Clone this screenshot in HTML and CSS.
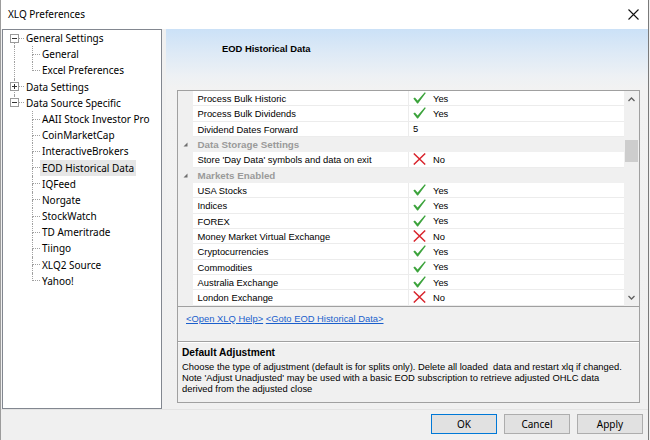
FILE: index.html
```html
<!DOCTYPE html>
<html>
<head>
<meta charset="utf-8">
<link rel="stylesheet" href="styles.css">
</head>
<body>
<div class="window">
  <div class="titlebar">
    <span class="title">XLQ Preferences</span>
    <svg class="close" width="11" height="11" viewBox="0 0 11 11"><path d="M0.5 0.5 L10.5 10.5 M10.5 0.5 L0.5 10.5" stroke="#111" stroke-width="1.1" fill="none"/></svg>
  </div>
  <div class="main">
    <div class="tree">
      <div class="row">
        <div class="cn l0"><div class="a nv"></div><div class="b"></div>
          <svg class="box" width="9" height="9" viewBox="0 0 9 9"><rect x="0.5" y="0.5" width="8" height="8" fill="#fff" stroke="#9a9a9a"/><path d="M2 4.5 H7" stroke="#333"/></svg>
        </div>
        <span class="lbl">General Settings</span>
      </div>
      <div class="row">
        <div class="pass v"></div>
        <div class="cn l1"><div class="a"></div><div class="b"></div></div>
        <span class="lbl">General</span>
      </div>
      <div class="row">
        <div class="pass v"></div>
        <div class="cn l1"><div class="a"></div><div class="b nv"></div></div>
        <span class="lbl">Excel Preferences</span>
      </div>
      <div class="row">
        <div class="cn l0"><div class="a"></div><div class="b"></div>
          <svg class="box" width="9" height="9" viewBox="0 0 9 9"><rect x="0.5" y="0.5" width="8" height="8" fill="#fff" stroke="#9a9a9a"/><path d="M2 4.5 H7 M4.5 2 V7" stroke="#333"/></svg>
        </div>
        <span class="lbl">Data Settings</span>
      </div>
      <div class="row">
        <div class="cn l0"><div class="a"></div><div class="b nv"></div>
          <svg class="box" width="9" height="9" viewBox="0 0 9 9"><rect x="0.5" y="0.5" width="8" height="8" fill="#fff" stroke="#9a9a9a"/><path d="M2 4.5 H7" stroke="#333"/></svg>
        </div>
        <span class="lbl">Data Source Specific</span>
      </div>
      <div class="row"><div class="pass"></div><div class="cn l1"><div class="a"></div><div class="b"></div></div><span class="lbl">AAII Stock Investor Pro</span></div>
      <div class="row"><div class="pass"></div><div class="cn l1"><div class="a"></div><div class="b"></div></div><span class="lbl">CoinMarketCap</span></div>
      <div class="row"><div class="pass"></div><div class="cn l1"><div class="a"></div><div class="b"></div></div><span class="lbl">InteractiveBrokers</span></div>
      <div class="row"><div class="pass"></div><div class="cn l1"><div class="a"></div><div class="b"></div></div><span class="lbl sel">EOD Historical Data</span></div>
      <div class="row"><div class="pass"></div><div class="cn l1"><div class="a"></div><div class="b"></div></div><span class="lbl">IQFeed</span></div>
      <div class="row"><div class="pass"></div><div class="cn l1"><div class="a"></div><div class="b"></div></div><span class="lbl">Norgate</span></div>
      <div class="row"><div class="pass"></div><div class="cn l1"><div class="a"></div><div class="b"></div></div><span class="lbl">StockWatch</span></div>
      <div class="row"><div class="pass"></div><div class="cn l1"><div class="a"></div><div class="b"></div></div><span class="lbl">TD Ameritrade</span></div>
      <div class="row"><div class="pass"></div><div class="cn l1"><div class="a"></div><div class="b"></div></div><span class="lbl">Tiingo</span></div>
      <div class="row"><div class="pass"></div><div class="cn l1"><div class="a"></div><div class="b"></div></div><span class="lbl">XLQ2 Source</span></div>
      <div class="row"><div class="pass"></div><div class="cn l1"><div class="a"></div><div class="b nv"></div></div><span class="lbl">Yahoo!</span></div>
    </div>

    <div class="panel">
      <div class="panel-head">EOD Historical Data</div>
      <div class="pg">
        <div class="grid">
          <div class="rows">
            <div class="prow"><div class="gut"></div><div class="lab">Process Bulk Historic</div><div class="val"><svg class="ico" width="13" height="12" viewBox="0 0 13 12"><path d="M0.3 6.6 L1.9 5.4 L4.6 8.6 L11.8 0.3 L12.8 1.1 L5 11.5 L4.2 11.5 Z" fill="#3ca33c"/></svg><span>Yes</span></div></div>
            <div class="prow"><div class="gut"></div><div class="lab">Process Bulk Dividends</div><div class="val"><svg class="ico" width="13" height="12" viewBox="0 0 13 12"><path d="M0.3 6.6 L1.9 5.4 L4.6 8.6 L11.8 0.3 L12.8 1.1 L5 11.5 L4.2 11.5 Z" fill="#3ca33c"/></svg><span>Yes</span></div></div>
            <div class="prow"><div class="gut"></div><div class="lab">Dividend Dates Forward</div><div class="val">5</div></div>
            <div class="prow cat"><div class="gut"><svg width="5" height="5" viewBox="0 0 5 5"><path d="M4.5 0.5 V4.5 H0.5 Z" fill="#6e6e6e"/></svg></div><div class="catlab">Data Storage Settings</div></div>
            <div class="prow"><div class="gut"></div><div class="lab">Store 'Day Data' symbols and data on exit</div><div class="val"><svg class="ico" width="13" height="12" viewBox="0 0 13 12"><path d="M0.8 0.5 L12.2 11.5 M12.2 0.5 L0.8 11.5" stroke="#d9262e" stroke-width="1.5" fill="none"/></svg><span>No</span></div></div>
            <div class="prow cat"><div class="gut"><svg width="5" height="5" viewBox="0 0 5 5"><path d="M4.5 0.5 V4.5 H0.5 Z" fill="#6e6e6e"/></svg></div><div class="catlab">Markets Enabled</div></div>
            <div class="prow"><div class="gut"></div><div class="lab">USA Stocks</div><div class="val"><svg class="ico" width="13" height="12" viewBox="0 0 13 12"><path d="M0.3 6.6 L1.9 5.4 L4.6 8.6 L11.8 0.3 L12.8 1.1 L5 11.5 L4.2 11.5 Z" fill="#3ca33c"/></svg><span>Yes</span></div></div>
            <div class="prow"><div class="gut"></div><div class="lab">Indices</div><div class="val"><svg class="ico" width="13" height="12" viewBox="0 0 13 12"><path d="M0.3 6.6 L1.9 5.4 L4.6 8.6 L11.8 0.3 L12.8 1.1 L5 11.5 L4.2 11.5 Z" fill="#3ca33c"/></svg><span>Yes</span></div></div>
            <div class="prow"><div class="gut"></div><div class="lab">FOREX</div><div class="val"><svg class="ico" width="13" height="12" viewBox="0 0 13 12"><path d="M0.3 6.6 L1.9 5.4 L4.6 8.6 L11.8 0.3 L12.8 1.1 L5 11.5 L4.2 11.5 Z" fill="#3ca33c"/></svg><span>Yes</span></div></div>
            <div class="prow"><div class="gut"></div><div class="lab">Money Market Virtual Exchange</div><div class="val"><svg class="ico" width="13" height="12" viewBox="0 0 13 12"><path d="M0.8 0.5 L12.2 11.5 M12.2 0.5 L0.8 11.5" stroke="#d9262e" stroke-width="1.5" fill="none"/></svg><span>No</span></div></div>
            <div class="prow"><div class="gut"></div><div class="lab">Cryptocurrencies</div><div class="val"><svg class="ico" width="13" height="12" viewBox="0 0 13 12"><path d="M0.3 6.6 L1.9 5.4 L4.6 8.6 L11.8 0.3 L12.8 1.1 L5 11.5 L4.2 11.5 Z" fill="#3ca33c"/></svg><span>Yes</span></div></div>
            <div class="prow"><div class="gut"></div><div class="lab">Commodities</div><div class="val"><svg class="ico" width="13" height="12" viewBox="0 0 13 12"><path d="M0.3 6.6 L1.9 5.4 L4.6 8.6 L11.8 0.3 L12.8 1.1 L5 11.5 L4.2 11.5 Z" fill="#3ca33c"/></svg><span>Yes</span></div></div>
            <div class="prow"><div class="gut"></div><div class="lab">Australia Exchange</div><div class="val"><svg class="ico" width="13" height="12" viewBox="0 0 13 12"><path d="M0.3 6.6 L1.9 5.4 L4.6 8.6 L11.8 0.3 L12.8 1.1 L5 11.5 L4.2 11.5 Z" fill="#3ca33c"/></svg><span>Yes</span></div></div>
            <div class="prow"><div class="gut"></div><div class="lab">London Exchange</div><div class="val"><svg class="ico" width="13" height="12" viewBox="0 0 13 12"><path d="M0.8 0.5 L12.2 11.5 M12.2 0.5 L0.8 11.5" stroke="#d9262e" stroke-width="1.5" fill="none"/></svg><span>No</span></div></div>
          </div>
          <div class="vscroll">
            <div class="sbtn"><svg width="7" height="5" viewBox="0 0 7 5"><path d="M0.5 4 L3.5 1 L6.5 4" stroke="#606060" stroke-width="1.3" fill="none"/></svg></div>
            <div class="track"><div class="thumb"></div></div>
            <div class="sbtn"><svg width="7" height="5" viewBox="0 0 7 5"><path d="M0.5 1 L3.5 4 L6.5 1" stroke="#606060" stroke-width="1.3" fill="none"/></svg></div>
          </div>
        </div>
        <div class="commands"><a class="link">&lt;Open XLQ Help&gt;</a> <a class="link">&lt;Goto EOD Historical Data&gt;</a></div>
        <div class="help">
          <div class="help-title">Default Adjustment</div>
          <div class="help-text">Choose the type of adjustment (default is for splits only). Delete all loaded&nbsp; data and restart xlq if changed. Note 'Adjust Unadjusted' may be used with a basic EOD subscription to retrieve adjusted OHLC data derived from the adjusted close</div>
        </div>
      </div>
    </div>
  </div>
  <div class="buttons">
    <button class="btn default">OK</button>
    <button class="btn">Cancel</button>
    <button class="btn">Apply</button>
  </div>
</div>
</body>
</html>
```
FILE: styles.css
```css
html, body {
  margin: 0;
  padding: 0;
  background: #f0f0f0;
}
.window {
  width: 649px;
  height: 440px;
  box-sizing: border-box;
  border-left: 1px solid #9c9c9c;
  border-right: 1px solid #7a7a7a;
  background: #f0f0f0;
  display: flex;
  flex-direction: column;
  font-family: "Noto Sans", "Open Sans", sans-serif;
  color: #000;
}
.titlebar {
  height: 29px;
  flex: none;
  background: #fff;
  display: flex;
  align-items: center;
  justify-content: space-between;
  padding: 0 9px 0 7px;
}
.title {
  font-size: 10px;
  line-height: 12px;
  margin-top: -1px;
}
.close {
  display: block;
  margin-top: -1px;
}
.main {
  height: 380px;
  flex: none;
  display: flex;
  padding-left: 1px;
  gap: 4px;
}
/* tree */
.tree {
  width: 160px;
  flex: none;
  box-sizing: border-box;
  border: 1px solid #828790;
  background: #fff;
  padding-left: 11px;
  font-size: 10px;
}
.row {
  display: flex;
  height: 16.2px;
}
.pass {
  width: 18px;
  flex: none;
  box-sizing: border-box;
}
.pass.v {
  border-left: 1px dotted #a0a0a0;
}
.cn {
  flex: none;
  display: flex;
  flex-direction: column;
  position: relative;
}
.cn.l0 { width: 10px; }
.cn.l1 { width: 8px; }
.cn .a {
  flex: 1;
  border-left: 1px dotted #a0a0a0;
  border-bottom: 1px dotted #a0a0a0;
}
.cn .b {
  flex: 1;
  border-left: 1px dotted #a0a0a0;
}
.cn .nv {
  border-left-color: transparent;
}
.box {
  position: absolute;
  left: -4px;
  top: calc(50% - 4.5px);
  display: block;
}
.lbl {
  padding: 0 2px;
  line-height: 16.2px;
  white-space: nowrap;
}
.lbl.sel {
  background: #e6e6e6;
}
/* right panel */
.panel {
  flex: 1;
  display: flex;
  flex-direction: column;
  background: linear-gradient(to bottom, #cbe1f7 0px, #dce9f6 22px, #eef1f4 48px, #f2f2f2 60px, #f0f0f0 100%);
}
.panel-head {
  height: 61px;
  flex: none;
  box-sizing: border-box;
  padding: 14px 0 0 56px;
  font-family: "Liberation Sans", Arial, sans-serif;
  font-weight: bold;
  font-size: 9.4px;
  line-height: 12px;
}
.pg {
  margin: 0 8px 0 11px;
  border: 1px solid #a0a0a0;
  display: flex;
  flex-direction: column;
  font-family: "Liberation Sans", Arial, sans-serif;
  font-size: 9.4px;
}
.grid {
  display: flex;
  background: #fff;
  border-bottom: 1px solid #a0a0a0;
}
.rows {
  flex: 1;
  display: flex;
  flex-direction: column;
}
.prow {
  display: flex;
  height: 15.333px;
  line-height: 15px;
}
.gut {
  width: 15px;
  flex: none;
  background: #f0f0f0;
  display: flex;
  align-items: center;
  justify-content: center;
}
.lab {
  width: 216px;
  flex: none;
  box-sizing: border-box;
  padding-left: 4.5px;
  border-right: 1px solid #ececec;
  border-bottom: 1px solid #ececec;
  white-space: nowrap;
  overflow: hidden;
}
.val {
  flex: 1;
  padding-left: 4px;
  border-bottom: 1px solid #ececec;
  display: flex;
  align-items: center;
  gap: 7px;
}
.ico {
  display: block;
  flex: none;
}
.prow.cat {
  background: #f0f0f0;
}
.catlab {
  flex: 1;
  padding-left: 4.5px;
  font-weight: bold;
  font-size: 9.8px;
  color: #9a9a9a;
}
.vscroll {
  width: 15px;
  flex: none;
  background: #f0f0f0;
  display: flex;
  flex-direction: column;
}
.sbtn {
  height: 17px;
  flex: none;
  display: flex;
  align-items: center;
  justify-content: center;
}
.track {
  flex: 1;
  display: flex;
  flex-direction: column;
  align-items: center;
}
.thumb {
  width: 13px;
  height: 22px;
  margin-top: 32px;
  background: #cdcdcd;
}
.commands {
  height: 35px;
  box-sizing: border-box;
  padding: 6px 0 0 8px;
  line-height: 12px;
  border-bottom: 1px solid #a0a0a0;
  background: #f0f0f0;
}
.link {
  color: #1a5fcc;
  text-decoration: underline;
}
.help {
  height: 60px;
  box-sizing: border-box;
  border-top: 1px solid #fff;
  padding: 3px 12px 0 4px;
  background: #f0f0f0;
}
.help-title {
  font-weight: bold;
  font-size: 10.2px;
  line-height: 13px;
}
.help-text {
  margin-top: 2px;
  line-height: 11px;
  font-size: 9.4px;
}
/* buttons */
.buttons {
  flex: 1;
  display: flex;
  justify-content: flex-end;
  align-items: flex-start;
  gap: 7px;
  padding: 4px 5px 0 0;
  border-top: 1px solid #e3e3e3;
}
.btn {
  width: 66px;
  height: 20px;
  margin: 0;
  padding: 0;
  box-sizing: border-box;
  border: 1px solid #adadad;
  background: #e1e1e1;
  font-family: "Noto Sans", "Open Sans", sans-serif;
  font-size: 10px;
  color: #000;
}
.btn.default {
  border-color: #0078d7;
}
```
